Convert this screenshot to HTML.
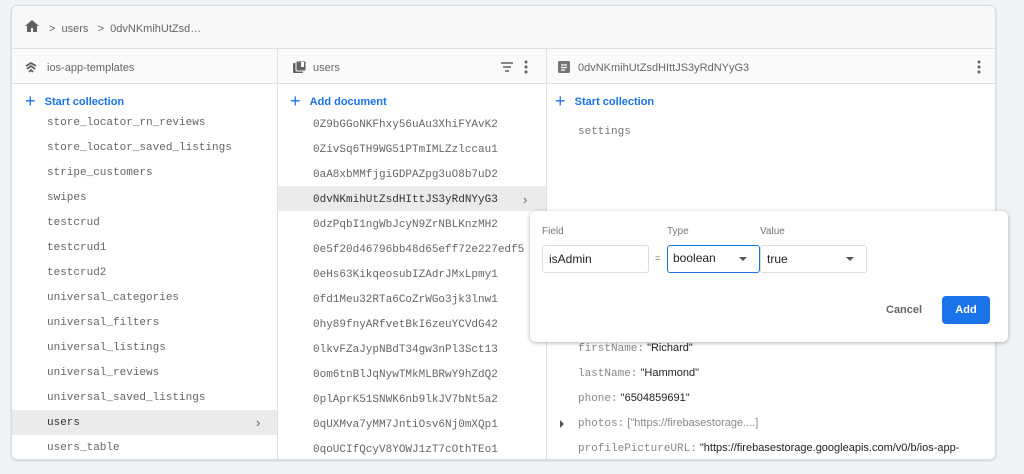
<!DOCTYPE html>
<html><head><style>
*{margin:0;padding:0;box-sizing:border-box}
body{width:1024px;height:474px;background:#f0f4f7;font-family:"Liberation Sans",sans-serif;position:relative;overflow:hidden}
.card{position:absolute;left:11px;top:5px;width:985px;height:455px;background:#fff;border:1px solid #dadce0;border-radius:6px;overflow:hidden;box-shadow:0 1px 2px rgba(0,0,0,.15)}
.a{position:absolute}
.mono{font-family:"Liberation Mono",monospace;font-size:11px;color:#666}
.blue{color:#1a73e8;font-size:11px;font-weight:bold}
.hdr{font-size:11px;color:#666}
.f{height:25px;line-height:25px;overflow:visible}
</style></head><body>
<div class="card">
  <div class="a" style="left:0;top:0;width:985px;height:43px;background:#f8f8f8;border-bottom:1px solid #e0e0e0"></div>
  <svg class="a" style="left:12px;top:13px" width="16" height="14" viewBox="0 0 16 14"><path d="M8 1L1 7h2v6h4V9h2v4h4V7h2z" fill="#616161"/></svg>
  <div class="a hdr" style="left:37px;top:17px;font-size:11px;color:#666">&gt;&nbsp;&nbsp;users&nbsp;&nbsp;&nbsp;&gt;&nbsp;&nbsp;0dvNKmihUtZsd…</div>
  <div class="a" style="left:0;top:43px;width:985px;height:35px;background:#fafafa;border-bottom:1px solid #e0e0e0"></div>
  <div class="a" style="left:265px;top:43px;width:1px;height:412px;background:#e0e0e0"></div>
  <div class="a" style="left:534px;top:43px;width:1px;height:412px;background:#e0e0e0"></div>
  <svg class="a" style="left:13px;top:55px" width="12" height="12" viewBox="0 0 12 12"><path d="M1 5L6 2l5 3M2 8l4-3 4 3M4 11l2-2 2 2" stroke="#616161" stroke-width="1.8" fill="none"/></svg>
  <div class="a hdr" style="left:35px;top:56px">ios-app-templates</div>
  <svg class="a" style="left:281px;top:55px" width="13" height="13" viewBox="0 0 13 13"><rect x="0" y="2" width="10" height="10" rx="1" fill="#616161"/><rect x="3" y="0" width="10" height="10" rx="1" fill="#616161" stroke="#fafafa"/><rect x="8" y="1" width="3" height="5" fill="#fafafa"/></svg>
  <div class="a hdr" style="left:301px;top:56px">users</div>
  <svg class="a" style="left:488px;top:55px" width="14" height="12" viewBox="0 0 14 12"><path d="M1 2h12M3 6h8M5 10h4" stroke="#616161" stroke-width="1.5"/></svg>
  <svg class="a" style="left:512px;top:53px" width="4" height="16" viewBox="0 0 4 16"><circle cx="2" cy="3" r="1.5" fill="#616161"/><circle cx="2" cy="8" r="1.5" fill="#616161"/><circle cx="2" cy="13" r="1.5" fill="#616161"/></svg>
  <svg class="a" style="left:546px;top:55px" width="12" height="12" viewBox="0 0 12 12"><rect width="12" height="12" rx="1.5" fill="#757575"/><path d="M3 4h6M3 6.5h6M3 9h4" stroke="#fff" stroke-width="1.2"/></svg>
  <div class="a hdr" style="left:566px;top:56px">0dvNKmihUtZsdHIttJS3yRdNYyG3</div>
  <svg class="a" style="left:965px;top:53px" width="4" height="16" viewBox="0 0 4 16"><circle cx="2" cy="3" r="1.5" fill="#616161"/><circle cx="2" cy="8" r="1.5" fill="#616161"/><circle cx="2" cy="13" r="1.5" fill="#616161"/></svg>

  <div class="a blue" style="left:13px;top:83px"><span style="font-size:18px;font-weight:normal;position:relative;top:2px">+</span>&nbsp;&nbsp;&nbsp;Start collection</div>
  <div class="a" style="left:0;top:404px;width:265px;height:25px;background:#ebebeb"></div>
  <div class="a" style="left:244px;top:409px;color:#666;font-size:13px">&#x203A;</div>
  <div class="a mono" style="left:35px;top:105px;line-height:25px">
  store_locator_rn_reviews<br>store_locator_saved_listings<br>stripe_customers<br>swipes<br>testcrud<br>testcrud1<br>testcrud2<br>universal_categories<br>universal_filters<br>universal_listings<br>universal_reviews<br>universal_saved_listings<br><span style="color:#333">users</span><br>users_table</div>

  <div class="a blue" style="left:278px;top:83px"><span style="font-size:18px;font-weight:normal;position:relative;top:2px">+</span>&nbsp;&nbsp;&nbsp;Add document</div>
  <div class="a" style="left:266px;top:180px;width:268px;height:25px;background:#ebebeb"></div>
  <div class="a" style="left:511px;top:186px;color:#666;font-size:13px">&#x203A;</div>
  <div class="a mono" style="left:301px;top:107px;line-height:25px">
  0Z9bGGoNKFhxy56uAu3XhiFYAvK2<br>0ZivSq6TH9WG51PTmIMLZzlccau1<br>0aA8xbMMfjgiGDPAZpg3uO8b7uD2<br><span style="color:#333">0dvNKmihUtZsdHIttJS3yRdNYyG3</span><br>0dzPqbI1ngWbJcyN9ZrNBLKnzMH2<br>0e5f20d46796bb48d65eff72e227edf5<br>0eHs63KikqeosubIZAdrJMxLpmy1<br>0fd1Meu32RTa6CoZrWGo3jk3lnw1<br>0hy89fnyARfvetBkI6zeuYCVdG42<br>0lkvFZaJypNBdT34gw3nPl3Sct13<br>0om6tnBlJqNywTMkMLBRwY9hZdQ2<br>0plAprK51SNWK6nb9lkJV7bNt5a2<br>0qUXMva7yMM7JntiOsv6Nj0mXQp1<br>0qoUCIfQcyV8YOWJ1zT7cOthTEo1</div>

  <div class="a blue" style="left:543px;top:83px"><span style="font-size:18px;font-weight:normal;position:relative;top:2px">+</span>&nbsp;&nbsp;&nbsp;Start collection</div>
  <div class="a mono" style="left:566px;top:120px;color:#777">settings</div>
  <div class="a" style="left:566px;top:330px;font-size:11px;white-space:nowrap">
   <div class="f"><span class="mono" style="color:#888">firstName:</span> <span style="color:#222">"Richard"</span></div>
   <div class="f"><span class="mono" style="color:#888">lastName:</span> <span style="color:#222">"Hammond"</span></div>
   <div class="f"><span class="mono" style="color:#888">phone:</span> <span style="color:#222">"6504859691"</span></div>
   <div class="f"><span class="mono" style="color:#888">photos:</span> <span style="color:#888">["https://firebasestorage....]</span></div>
   <div class="f"><span class="mono" style="color:#888">profilePictureURL:</span> <span style="color:#222">"https://firebasestorage.googleapis.com/v0/b/ios-app-</span></div>
  </div>
  <div class="a" style="left:548px;top:414px;width:0;height:0;border-left:4px solid #555;border-top:4px solid transparent;border-bottom:4px solid transparent"></div>
</div>

<div class="a" style="left:530px;top:211px;width:478px;height:131px;background:#fff;border-radius:6px;box-shadow:0 1px 4px rgba(0,0,0,.3)">
  <div class="a" style="left:12px;top:15px;font-size:10px;color:#777">Field</div>
  <div class="a" style="left:137px;top:15px;font-size:10px;color:#777">Type</div>
  <div class="a" style="left:230px;top:15px;font-size:10px;color:#777">Value</div>
  <div class="a" style="left:12px;top:34px;width:107px;height:28px;border:1px solid #ddd;border-radius:3px;font-size:12px;line-height:26px;padding-left:6px;color:#222">isAdmin</div>
  <div class="a" style="left:125px;top:42px;font-size:9px;color:#666">=</div>
  <div class="a" style="left:137px;top:34px;width:93px;height:28px;border:1.5px solid #1a73e8;border-radius:3px;font-size:12px;line-height:25px;padding-left:5px;color:#222">boolean<span style="position:absolute;right:12px;top:11px;border-top:4px solid #555;border-left:4px solid transparent;border-right:4px solid transparent"></span></div>
  <div class="a" style="left:230px;top:34px;width:107px;height:28px;border:1px solid #ddd;border-radius:3px;font-size:12px;line-height:26px;padding-left:6px;color:#222">true<span style="position:absolute;right:12px;top:11px;border-top:4px solid #555;border-left:4px solid transparent;border-right:4px solid transparent"></span></div>
  <div class="a" style="left:356px;top:93px;font-size:11px;font-weight:bold;color:#666">Cancel</div>
  <div class="a" style="left:412px;top:85px;width:48px;height:28px;background:#1a73e8;border-radius:4px;color:#fff;font-size:11px;font-weight:bold;text-align:center;line-height:28px">Add</div>
</div>
</body></html>
